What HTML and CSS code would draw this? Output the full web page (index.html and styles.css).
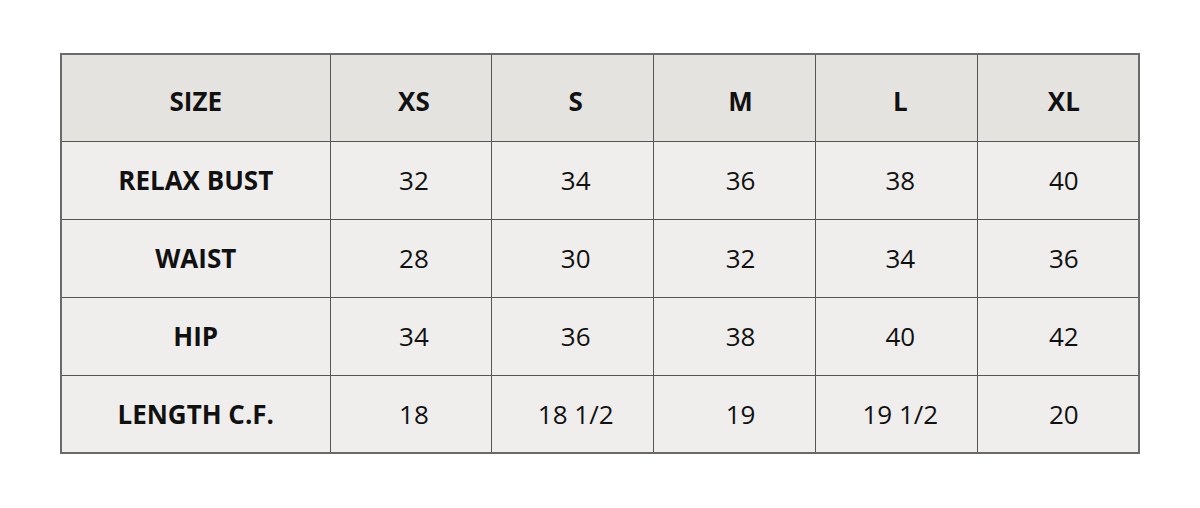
FILE: index.html
```html
<!DOCTYPE html>
<html>
<head>
<meta charset="utf-8">
<link rel="stylesheet" href="styles.css">
</head>
<body>
<div class="page">
<table class="sizes">
<colgroup><col class="c-first"><col class="c"><col class="c"><col class="c"><col class="c"><col class="c"></colgroup>
<thead>
<tr><th>SIZE</th><th class="k2">XS</th><th class="k3">S</th><th class="k4">M</th><th class="k5">L</th><th class="k6">XL</th></tr>
</thead>
<tbody>
<tr><th>RELAX BUST</th><td class="k2">32</td><td class="k3">34</td><td class="k4">36</td><td class="k5">38</td><td class="k6">40</td></tr>
<tr><th>WAIST</th><td class="k2">28</td><td class="k3">30</td><td class="k4">32</td><td class="k5">34</td><td class="k6">36</td></tr>
<tr><th>HIP</th><td class="k2">34</td><td class="k3">36</td><td class="k4">38</td><td class="k5">40</td><td class="k6">42</td></tr>
<tr><th>LENGTH C.F.</th><td class="k2">18</td><td class="k3">18 1/2</td><td class="k4">19</td><td class="k5">19 1/2</td><td class="k6">20</td></tr>
</tbody>
</table>
</div>
</body>
</html>
```
FILE: styles.css
```css
html, body {
  margin: 0;
  padding: 0;
  background: #ffffff;
}
.page {
  padding: 53px 60px 0 60px;
  font-family: "Open Sans", "Liberation Sans", sans-serif;
}
.sizes {
  width: 1080px;
  border-collapse: collapse;
  border: 2px solid #6a6a6a;
  table-layout: fixed;
  color: #111;
}
.c-first { width: 269px; }
.sizes th, .sizes td {
  border: 1px solid #555;
  text-align: center;
  vertical-align: middle;
  font-size: 26px;
  padding: 0;
}
.sizes th { font-weight: 700; }
.sizes td { font-weight: 400; }
.sizes .k2, .sizes .k3 { padding-left: 6px; }
.sizes .k4 { padding-left: 12px; }
.sizes .k5 { padding-left: 8px; }
.sizes .k6 { padding-left: 12px; }
.sizes thead th {
  background: #e4e3e0;
  height: 87px;
  padding-top: 6px;
  box-sizing: border-box;
}
.sizes tbody th, .sizes tbody td {
  background: #efeeed;
  height: 78px;
  box-sizing: border-box;
}
```
